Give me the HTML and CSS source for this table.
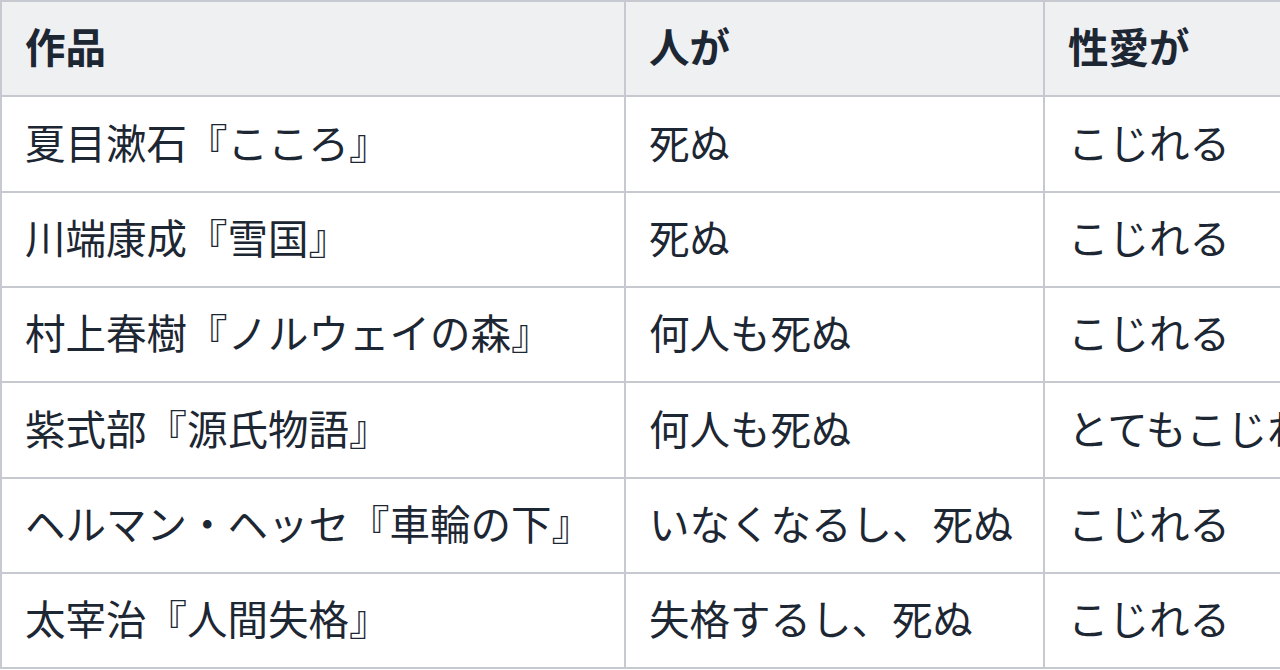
FILE: index.html
```html
<!DOCTYPE html>
<html lang="ja">
<head>
<meta charset="utf-8">
<link rel="stylesheet" href="styles.css">
</head>
<body>
<table class="works">
  <colgroup>
    <col class="c1"><col class="c2"><col class="c3">
  </colgroup>
  <thead>
    <tr><th>作品</th><th>人が</th><th>性愛が</th></tr>
  </thead>
  <tbody>
    <tr><td>夏目漱石『こころ』</td><td>死ぬ</td><td>こじれる</td></tr>
    <tr><td>川端康成『雪国』</td><td>死ぬ</td><td>こじれる</td></tr>
    <tr><td>村上春樹『ノルウェイの森』</td><td>何人も死ぬ</td><td>こじれる</td></tr>
    <tr><td>紫式部『源氏物語』</td><td>何人も死ぬ</td><td>とてもこじれる</td></tr>
    <tr><td>ヘルマン・ヘッセ『車輪の下』</td><td>いなくなるし、死ぬ</td><td>こじれる</td></tr>
    <tr><td>太宰治『人間失格』</td><td>失格するし、死ぬ</td><td>こじれる</td></tr>
  </tbody>
</table>
</body>
</html>
```

FILE: styles.css
```css
html, body {
  margin: 0;
  padding: 0;
  background: #ffffff;
  overflow: hidden;
  width: 1280px;
  height: 670px;
}
.works {
  border-collapse: collapse;
  table-layout: fixed;
  width: 1374px;
  font-family: "Noto Sans CJK JP", "Noto Sans", sans-serif;
  font-size: 40.5px;
  color: #1d2733;
}
.c1 { width: 624px; }
.c2 { width: 419px; }
.c3 { width: 331px; }
.works th,
.works td {
  border: 2px solid #c6cad0;
  padding: 0 23px 4px;
  height: 95.33px;
  box-sizing: border-box;
  text-align: left;
  vertical-align: middle;
  white-space: nowrap;
  overflow: hidden;
  line-height: 1.2;
}
.works th {
  background: #eff0f2;
  font-weight: 700;
}
.works td {
  font-weight: 400;
}
```
